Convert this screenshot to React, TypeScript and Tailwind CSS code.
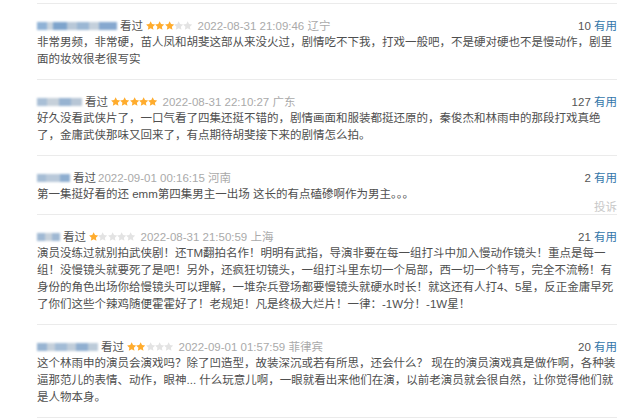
import React from "react";

type Review = {
  nameW: number;
  blocks: { w: number; c: string }[];
  stars: number;
  date: string;
  loc: string;
  votes: number;
  lines: string[];
  report?: boolean;
};

const reviews: Review[] = [
  {
    nameW: 80,
    blocks: [
      { w: 10, c: "#8fb2d6" },
      { w: 6, c: "#c9d4de" },
      { w: 14, c: "#7ea4cc" },
      { w: 10, c: "#b8c8d8" },
      { w: 12, c: "#9bb7d4" },
      { w: 10, c: "#c4d0dc" },
      { w: 18, c: "#86a8cf" },
    ],
    stars: 3,
    date: "2022-08-31 21:09:46",
    loc: "辽宁",
    votes: 10,
    lines: [
      "非常男频，非常硬，苗人凤和胡斐这部从来没火过，剧情吃不下我，打戏一般吧，不是硬对硬也不是慢动作，剧里",
      "面的妆效很老很写实",
    ],
  },
  {
    nameW: 45,
    blocks: [
      { w: 10, c: "#a9bfd6" },
      { w: 12, c: "#c6d0da" },
      { w: 12, c: "#97b3d1" },
      { w: 11, c: "#b7c6d6" },
    ],
    stars: 5,
    date: "2022-08-31 22:10:27",
    loc: "广东",
    votes: 127,
    lines: [
      "好久没看武侠片了，一口气看了四集还挺不错的，剧情画面和服装都挺还原的，秦俊杰和林雨申的那段打戏真绝",
      "了，金庸武侠那味又回来了，有点期待胡斐接下来的剧情怎么拍。",
    ],
  },
  {
    nameW: 33,
    blocks: [
      { w: 9, c: "#a6bdd5" },
      { w: 14, c: "#b9c9da" },
      { w: 10, c: "#8eaed0" },
    ],
    stars: 0,
    date: "2022-09-01 00:16:15",
    loc: "河南",
    votes: 2,
    lines: ["第一集挺好看的还 emm第四集男主一出场 这长的有点磕碜啊作为男主。。。"],
    report: true,
  },
  {
    nameW: 23,
    blocks: [
      { w: 8, c: "#a0b9d4" },
      { w: 7, c: "#c7d1db" },
      { w: 8, c: "#9fb8d3" },
    ],
    stars: 1,
    date: "2022-08-31 21:50:59",
    loc: "上海",
    votes: 21,
    lines: [
      "演员没练过就别拍武侠剧！还TM翻拍名作！明明有武指，导演非要在每一组打斗中加入慢动作镜头！重点是每一",
      "组！没慢镜头就要死了是吧！另外，还疯狂切镜头，一组打斗里东切一个局部，西一切一个特写，完全不流畅！有",
      "身份的角色出场你给慢镜头可以理解，一堆杂兵登场都要慢镜头就硬水时长！就这还有人打4、5星，反正金庸早死",
      "了你们这些个辣鸡随便霍霍好了！老规矩！凡是终极大烂片！一律：-1W分！-1W星！",
    ],
  },
  {
    nameW: 61,
    blocks: [
      { w: 10, c: "#98b4d2" },
      { w: 8, c: "#c5d0db" },
      { w: 12, c: "#a3bcd6" },
      { w: 9, c: "#c0cdda" },
      { w: 12, c: "#90afd0" },
      { w: 10, c: "#bccbd9" },
    ],
    stars: 2,
    date: "2022-09-01 01:57:59",
    loc: "菲律宾",
    votes: 20,
    lines: [
      "这个林雨申的演员会演戏吗？除了凹造型，故装深沉或若有所思，还会什么？ 现在的演员演戏真是做作啊，各种装",
      "逼那范儿的表情、动作，眼神... 什么玩意儿啊，一眼就看出来他们在演，以前老演员就会很自然，让你觉得他们就",
      "是人物本身。",
    ],
  },
];

function Star({ on }: { on: boolean }) {
  return (
    <svg width="9.3" height="9.3" viewBox="1.5 1.5 21 21" className="shrink-0">
      <path
        d="M12 1.8l3.1 6.6 7.2.9-5.3 5 1.4 7.1L12 17.9l-6.4 3.5 1.4-7.1-5.3-5 7.2-.9z"
        fill={on ? "#ffac2d" : "#e3e3e3"}
      />
    </svg>
  );
}

function Name({ r }: { r: Review }) {
  return (
    <div
      className="flex items-center h-[9px] blur-[0.8px] shrink-0"
      style={{ width: r.nameW }}
    >
      {r.blocks.map((b, i) => (
        <div
          key={i}
          className="h-[8px]"
          style={{ width: b.w, background: b.c }}
        />
      ))}
    </div>
  );
}

function Row({ r }: { r: Review }) {
  return (
    <div className="relative border-b border-[#ebebeb] pt-[14px] pb-[11px]">
      <div className="flex items-center h-[16px] leading-[16px]">
        <Name r={r} />
        <span className="ml-[3px] text-[#555]">看过</span>
        {r.stars > 0 && (
          <span className="ml-[3px] flex items-center">
            {[0, 1, 2, 3, 4].map((i) => (
              <Star key={i} on={i < r.stars} />
            ))}
          </span>
        )}
        <span className={(r.stars > 0 ? "ml-[5px]" : "ml-[2px]") + " text-[#aaa]"}>
          {r.date} {r.loc}
        </span>
        <span className="ml-auto">
          <span className="text-[#555]">{r.votes}</span>{" "}
          <span className="text-[#3377aa]">有用</span>
        </span>
      </div>
      <div className="text-[#4f4f4f] leading-[17px]">
        {r.lines.map((l, i) => (
          <div key={i} className="whitespace-nowrap">
            {l}
          </div>
        ))}
      </div>
      {r.report && (
        <div className="absolute right-0 bottom-[1px] text-[#c8c8c8] leading-[12px]">
          投诉
        </div>
      )}
    </div>
  );
}

export default function App() {
  return (
    <div
      className="w-[641px] h-[420px] overflow-hidden bg-white pt-[3px] text-[11.5px]"
      style={{ fontFamily: '"Liberation Sans", "Noto Sans CJK SC", sans-serif' }}
    >
      <div className="ml-[37px] w-[580px] border-t border-[#ebebeb]">
        {reviews.map((r, i) => (
          <Row key={i} r={r} />
        ))}
      </div>
    </div>
  );
}
